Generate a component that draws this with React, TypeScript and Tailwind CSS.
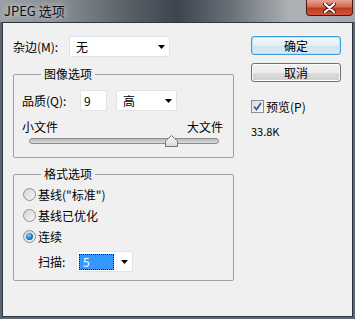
import type { ReactNode } from 'react'

const font = "font-['Noto_Sans_CJK_SC','Liberation_Sans',sans-serif]"

function Arrow() {
  return (
    <svg width="7" height="4" viewBox="0 0 7 4" className="shrink-0">
      <polygon points="0,0 7,0 3.5,4" fill="#000" />
    </svg>
  )
}

function Select({ value, width, focused }: { value: string; width: string; focused?: boolean }) {
  return (
    <div
      className={`flex h-[21px] items-center justify-between rounded-[2px] border border-[#e2e3e4] bg-white pr-[4px] ${width} ${
        focused ? 'pl-[2px]' : 'pl-[6px]'
      }`}
    >
      {focused ? (
        <span className="flex h-[16px] w-[35px] items-center border border-dotted border-[#202020] bg-[#3399ff] pl-[3px] leading-none text-white">
          {value}
        </span>
      ) : (
        <span className="leading-none">{value}</span>
      )}
      <Arrow />
    </div>
  )
}

function Group({ title, children, className }: { title: string; children: ReactNode; className?: string }) {
  return (
    <fieldset className={`w-[221px] rounded-[2px] border border-[#a0a0a0] pl-[8px] pr-[10px] ${className ?? ''}`}>
      <legend className="ml-[19px] px-[3px] leading-[16px]">{title}</legend>
      {children}
    </fieldset>
  )
}

function Radio({ label, checked }: { label: string; checked?: boolean }) {
  return (
    <div className="flex h-[21px] items-center gap-[2px] pl-[1px]">
      <span className="flex h-[13px] w-[13px] items-center justify-center rounded-full border border-[#8e8f8f] bg-[linear-gradient(135deg,#d4d4d4,#f7f7f7)]">
        {checked && (
          <span className="h-[7px] w-[7px] rounded-full bg-[radial-gradient(circle_at_40%_35%,#8fd0ff,#1a78c9_55%,#0d3c82)]" />
        )}
      </span>
      <span className="leading-none">{label}</span>
    </div>
  )
}

function Button({ label, primary }: { label: string; primary?: boolean }) {
  return (
    <div
      className={`flex h-[19px] w-[90px] items-center justify-center rounded-[3px] border ${
        primary
          ? 'border-[#3c9fd9] bg-[linear-gradient(#f4f9fd,#e3eef6_50%,#d2e3ef_51%,#dcebf5)] shadow-[inset_0_0_0_1px_#b8e0f7]'
          : 'border-[#707070] bg-[linear-gradient(#f2f2f2,#ebebeb_50%,#dddddd_51%,#cfcfcf)] shadow-[inset_0_0_0_1px_#fcfcfc]'
      }`}
    >
      <span className="leading-none">{label}</span>
    </div>
  )
}

export default function App() {
  return (
    <div className={`relative h-[319px] w-[355px] overflow-hidden bg-[#5d6670] text-[12px] text-black ${font}`}>
      {/* Title bar */}
      <div className="flex h-[22px] items-start justify-between bg-[linear-gradient(90deg,#9aa0a5_0%,#868b91_18%,#5c626a_35%,#3d444e_50%,#6a7078_65%,#aeb2b6_82%,#a3a7ab_100%)]">
        <span className="pl-[4px] pt-[3px] text-[13px] leading-[16px] text-[#101010] [text-shadow:0_0_6px_#ffffff]">
          JPEG 选项
        </span>
        <div className="mr-[2px] flex h-[16px] w-[47px] items-center justify-center rounded-b-[4px] border border-t-0 border-[#4a1a12] bg-[linear-gradient(#e8a493,#d46a50_45%,#c13b22_55%,#d2553a)]">
          <svg width="13" height="10" viewBox="0 0 13 10">
            <path d="M2 1 L11 9 M11 1 L2 9" stroke="#3b1a14" strokeWidth="4" strokeLinecap="round" />
            <path d="M2 1 L11 9 M11 1 L2 9" stroke="#ffffff" strokeWidth="2.2" strokeLinecap="round" />
          </svg>
        </div>
      </div>

      {/* Client area */}
      <div className="ml-[2px] flex h-[295px] w-[351px] border border-[#2c3640] bg-[#f0f0f0] pl-[10px]">
        {/* Left column */}
        <div className="flex w-[221px] flex-col">
          <div className="mt-[13px] flex h-[21px] items-center">
            <span className="w-[56px] leading-none">杂边(M):</span>
            <Select value="无" width="w-[101px]" />
          </div>

          <Group title="图像选项" className="mt-[9px] pb-[10px]">
            <div className="mt-[8px] flex h-[21px] items-center">
              <span className="w-[58px] leading-none">品质(Q):</span>
              <div className="flex h-[21px] w-[27px] items-center border border-[#e2e3e4] bg-white pl-[3px] leading-none">
                9
              </div>
              <div className="ml-[9px]">
                <Select value="高" width="w-[61px]" />
              </div>
            </div>
            <div className="mt-[8px] flex h-[16px] items-center justify-between leading-none">
              <span>小文件</span>
              <span>大文件</span>
            </div>
            <div className="relative ml-[7px] mt-0 flex h-[12px] w-[190px] items-center">
              <div className="h-[6px] w-full rounded-full border border-[#8d8d8d] bg-[linear-gradient(#b8b8b8,#d9d9d9)]" />
              <svg width="13" height="12" viewBox="0 0 13 12" className="absolute left-[136px] top-0">
                <defs>
                  <linearGradient id="thumb" x1="0" y1="0" x2="0" y2="1">
                    <stop offset="0" stopColor="#ffffff" />
                    <stop offset="1" stopColor="#d6d6d6" />
                  </linearGradient>
                </defs>
                <polygon points="0.5,11.5 0.5,6 6.5,0.5 12.5,6 12.5,11.5" fill="url(#thumb)" stroke="#767676" />
              </svg>
            </div>
          </Group>

          <Group title="格式选项" className="mt-[8px] pb-[8px]">
            <div className="mt-[2px]">
              <Radio label={'基线("标准")'} />
              <Radio label="基线已优化" />
              <Radio label="连续" checked />
            </div>
            <div className="mt-[4px] flex h-[21px] items-center pl-[16px]">
              <span className="w-[38px] leading-none">扫描:</span>
              <Select value="5" width="w-[57px]" focused />
            </div>
          </Group>
        </div>

        {/* Right column */}
        <div className="ml-[17px] flex flex-col">
          <div className="mt-[13px]">
            <Button label="确定" primary />
          </div>
          <div className="mt-[8px]">
            <Button label="取消" />
          </div>
          <div className="mt-[18px] flex h-[13px] items-center gap-[2px]">
            <span className="flex h-[13px] w-[13px] items-center justify-center border border-[#8e8f8f] bg-[linear-gradient(135deg,#dcdcdc,#fafafa)]">
              <svg width="9" height="9" viewBox="0 0 9 9">
                <path d="M1 4.5 L3.5 7.5 L8 1" fill="none" stroke="#3a5aa8" strokeWidth="1.8" />
              </svg>
            </span>
            <span className="leading-none">预览(P)</span>
          </div>
          <div className="mt-[13px] text-[11px] leading-none">33.8K</div>
        </div>
      </div>
    </div>
  )
}
